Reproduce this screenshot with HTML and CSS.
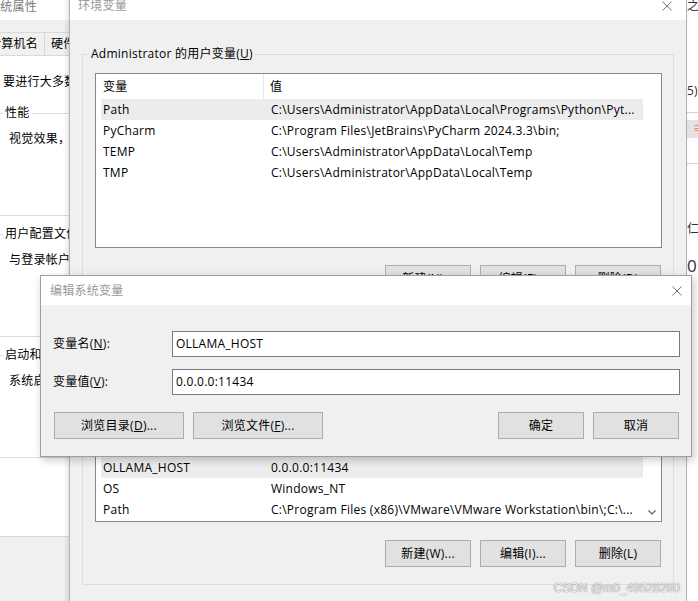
FILE: index.html
```html
<!DOCTYPE html>
<html lang="zh-CN">

<head>
    <meta charset="UTF-8">
    <meta name="viewport" content="width=device-width, initial-scale=1.0">
    <title>环境变量</title>

    <link rel="stylesheet" href="styles.css">
</head>

<body>
    <div class="desktop">

        <!-- 系统属性 (behind) -->
        <div class="window sysprops">
            <div class="titlebar"><span class="title">系统属性</span></div>
            <div class="body">
                <div class="tabs">
                    <span class="tab">计算机名</span>
                    <span class="tab">硬件</span>
                    <span class="tab">高级</span>
                </div>
                <div class="tabpanel">
                    <p class="note">要进行大多数更改，你必须作为管理员登录。</p>
                    <fieldset class="group">
                        <legend>性能</legend>
                        <p>视觉效果，处理器计划，内存使用，以及虚拟内存</p>
                    </fieldset>
                    <fieldset class="group">
                        <legend>用户配置文件</legend>
                        <p>与登录帐户相关的桌面设置</p>
                    </fieldset>
                    <fieldset class="group">
                        <legend>启动和故障恢复</legend>
                        <p>系统启动、系统故障和调试信息</p>
                    </fieldset>
                </div>
            </div>
        </div>

        <!-- page peeking out on the right -->
        <div class="window sidepage">
            <p class="frag frag-top">之</p>
            <p class="frag frag-path">5)\VM</p>
            <div class="frag-bar"><span>≡</span></div>
            <p class="frag frag-mid">仁</p>
            <p class="frag frag-big">0.</p>
        </div>

        <!-- 环境变量 -->
        <div class="window envvars">
            <div class="titlebar">
                <span class="title">环境变量</span>
                <svg class="close" viewBox="0 0 10 10"><path d="M0.5 0.5L9.5 9.5M9.5 0.5L0.5 9.5" /></svg>
            </div>
            <div class="body">
                <fieldset class="group">
                    <legend>Administrator 的用户变量(<u>U</u>)</legend>
                    <div class="listview user-list">
                        <div class="lv-main">
                            <div class="lv-head"><span class="col-name">变量</span><span class="col-value">值</span></div>
                            <div class="lv-rows">
                                <div class="lv-row selected"><span class="col-name">Path</span><span class="col-value">C:\Users\Administrator\AppData\Local\Programs\Python\Pyt...</span></div>
                                <div class="lv-row"><span class="col-name">PyCharm</span><span class="col-value">C:\Program Files\JetBrains\PyCharm 2024.3.3\bin;</span></div>
                                <div class="lv-row"><span class="col-name">TEMP</span><span class="col-value">C:\Users\Administrator\AppData\Local\Temp</span></div>
                                <div class="lv-row"><span class="col-name">TMP</span><span class="col-value">C:\Users\Administrator\AppData\Local\Temp</span></div>
                            </div>
                        </div>
                        <div class="lv-gutter"></div>
                    </div>
                    <div class="btn-row">
                        <button>新建(N)...</button>
                        <button>编辑(E)...</button>
                        <button>删除(D)</button>
                    </div>
                </fieldset>

                <fieldset class="group">
                    <legend>系统变量(<u>S</u>)</legend>
                    <div class="listview system-list">
                        <div class="lv-main">
                            <div class="lv-head"><span class="col-name">变量</span><span class="col-value">值</span></div>
                            <div class="lv-rows">
                                <div class="lv-row"><span class="col-name">ComSpec</span><span class="col-value">C:\Windows\system32\cmd.exe</span></div>
                                <div class="lv-row"><span class="col-name">DriverData</span><span class="col-value">C:\Windows\System32\Drivers\DriverData</span></div>
                                <div class="lv-row"><span class="col-name">NUMBER_OF_PROCESSORS</span><span class="col-value">8</span></div>
                                <div class="lv-row selected"><span class="col-name">OLLAMA_HOST</span><span class="col-value">0.0.0.0:11434</span></div>
                                <div class="lv-row"><span class="col-name">OS</span><span class="col-value">Windows_NT</span></div>
                                <div class="lv-row"><span class="col-name">Path</span><span class="col-value">C:\Program Files (x86)\VMware\VMware Workstation\bin\;C:\...</span></div>
                            </div>
                        </div>
                        <div class="lv-gutter">
                            <div class="scroll-arrow">
                                <svg viewBox="0 0 8 5"><path d="M0.5 0.5L4 4L7.5 0.5" /></svg>
                            </div>
                        </div>
                    </div>
                    <div class="btn-row">
                        <button>新建(W)...</button>
                        <button>编辑(I)...</button>
                        <button>删除(L)</button>
                    </div>
                </fieldset>

                <div class="btn-row footer">
                    <button>确定</button>
                    <button>取消</button>
                </div>
            </div>
        </div>

        <!-- 编辑系统变量 -->
        <div class="window edit-dialog">
            <div class="titlebar">
                <span class="title">编辑系统变量</span>
                <svg class="close" viewBox="0 0 10 10"><path d="M0.5 0.5L9.5 9.5M9.5 0.5L0.5 9.5" /></svg>
            </div>
            <div class="body">
                <div class="field">
                    <label>变量名(<u>N</u>):</label>
                    <div class="textbox">OLLAMA_HOST</div>
                </div>
                <div class="field">
                    <label>变量值(<u>V</u>):</label>
                    <div class="textbox">0.0.0.0:11434</div>
                </div>
                <div class="actions">
                    <button class="wide">浏览目录(<u>D</u>)...</button>
                    <button class="wide">浏览文件(<u>F</u>)...</button>
                    <span class="spacer"></span>
                    <button>确定</button>
                    <button>取消</button>
                </div>
            </div>
        </div>

        <span class="watermark">CSDN @m0_49528260</span>
    </div>
</body>

</html>
```

FILE: styles.css
```css
* {
    box-sizing: border-box;
    margin: 0;
    padding: 0;
}

body {
    font-family: "Open Sans", "Noto Sans CJK SC", sans-serif;
    font-size: 12px;
    line-height: 18px;
    letter-spacing: 0.25px;
    color: #000;
    background: #f0f0f0;
}

.desktop {
    position: relative;
    width: 698px;
    height: 601px;
    overflow: hidden;
}

/* windows sit on the desktop at their own spots */
.window {
    position: absolute;
    display: flex;
    flex-direction: column;
    background: #f0f0f0;
}

.titlebar {
    display: flex;
    align-items: center;
    justify-content: space-between;
    flex-shrink: 0;
    background: #fff;
}

.title {
    color: #999;
    white-space: nowrap;
}

.close {
    width: 10px;
    height: 10px;
    fill: none;
    stroke: #777;
    stroke-width: 1;
}

fieldset.group {
    border: 1px solid #dcdcdc;
}

fieldset.group legend {
    padding: 0 2px;
    margin-left: -6px;
    white-space: nowrap;
}

button {
    font: inherit;
    letter-spacing: inherit;
    width: 86px;
    height: 27px;
    color: #000;
    background: #e1e1e1;
    border: 1px solid #adadad;
    white-space: nowrap;
}

/* 系统属性 */
.sysprops {
    left: -32px;
    top: -10px;
    width: 102px;
    height: 620px;
    z-index: 1;
}

.sysprops .titlebar {
    height: 30px;
    padding: 4px 0 0 20px;
}

.sysprops .title {
    color: #7a7a7a;
}

.sysprops .body {
    padding: 12px 0 0 8px;
}

.tabs {
    display: flex;
    height: 23px;
    margin-left: 6px;
}

.tab {
    padding: 0 6px;
    line-height: 22px;
    border: 1px solid #d9d9d9;
    border-bottom: none;
    white-space: nowrap;
}

.tab + .tab {
    border-left: none;
}

.tabpanel {
    height: 482px;
    width: 200px;
    background: #fff;
    border: 1px solid #d9d9d9;
    padding: 17px 0 0 20px;
    white-space: nowrap;
}

.tabpanel .note {
    margin-left: 6px;
}

.sysprops fieldset.group {
    height: 112px;
    margin-top: 9px;
    padding: 8px 11px;
}

.sysprops .note + fieldset.group {
    margin-top: 13px;
}

/* right-hand page */
.sidepage {
    left: 686px;
    top: 0;
    width: 30px;
    height: 601px;
    background: #fff;
    z-index: 1;
    padding-left: 1px;
}

.frag {
    white-space: nowrap;
    color: #333;
}

.frag-top {
    margin-top: -3px;
}

.frag-path {
    margin-top: 67px;
}

.frag-bar {
    margin-top: 12px;
    height: 52px;
    border-top: 1px solid #d0d0d0;
    border-bottom: 1px solid #d0d0d0;
    padding-top: 7px;
}

.frag-bar span {
    display: block;
    height: 18px;
    background: #e4e4e4;
    color: #e07a1f;
    padding-left: 6px;
}

.frag-mid {
    margin-top: 56px;
}

.frag-big {
    margin-top: 19px;
    font-size: 17px;
}

/* 环境变量 */
.envvars {
    left: 69px;
    top: -10px;
    width: 618px;
    height: 660px;
    z-index: 2;
    border: 1px solid #b4b4b4;
    box-shadow: -2px 0 5px rgba(0, 0, 0, 0.12);
}

.envvars .titlebar {
    height: 29px;
    padding: 0 14px 0 8px;
}

.envvars .body {
    padding: 25px 12px 0;
}

.envvars fieldset.group {
    padding: 10px 11px 10px 12px;
}

.envvars fieldset.group + fieldset.group {
    margin-top: 8px;
    padding-bottom: 17px;
}

.btn-row {
    display: flex;
    justify-content: flex-end;
    gap: 9px;
    margin-top: 17px;
    padding-right: 1px;
}

.system-list + .btn-row {
    margin-top: 18px;
}

.btn-row.footer {
    margin-top: 20px;
}

/* list views */
.listview {
    display: flex;
    background: #fff;
    border: 1px solid #828790;
}

.user-list {
    height: 175px;
}

.system-list {
    height: 183px;
}

.lv-main {
    flex: 1;
    display: flex;
    flex-direction: column;
    overflow: hidden;
}

.lv-gutter {
    width: 18px;
    display: flex;
    flex-direction: column;
    justify-content: flex-end;
}

.lv-head {
    display: flex;
    height: 25px;
    flex-shrink: 0;
    line-height: 25px;
}

.lv-head .col-name {
    width: 168px;
    padding-left: 7px;
    border-right: 1px solid #e5e5e5;
}

.lv-head .col-value {
    padding-left: 6px;
}

.lv-rows {
    flex: 1;
    display: flex;
    flex-direction: column;
    overflow: hidden;
}

.system-list .lv-rows {
    justify-content: flex-end;
    padding-bottom: 1px;
}

.lv-row {
    display: flex;
    flex-shrink: 0;
    height: 21px;
    line-height: 21px;
    margin-left: 5px;
    white-space: nowrap;
}

.lv-row.selected {
    background: #ececec;
}

.lv-row .col-name {
    width: 168px;
    flex-shrink: 0;
    padding-left: 2px;
}

.lv-row .col-value {
    flex: 1;
    overflow: hidden;
    padding-left: 2px;
}

.scroll-arrow {
    height: 17px;
    display: flex;
    align-items: center;
    justify-content: center;
}

.scroll-arrow svg {
    width: 8px;
    height: 5px;
    fill: none;
    stroke: #606060;
    stroke-width: 1.2;
}

/* 编辑系统变量 */
.edit-dialog {
    left: 40px;
    top: 275px;
    width: 652px;
    height: 182px;
    z-index: 3;
    border: 1px solid #9e9e9e;
    box-shadow: 2px 3px 8px rgba(0, 0, 0, 0.22);
}

.edit-dialog .titlebar {
    height: 29px;
    padding: 0 9px;
}

.edit-dialog .body {
    display: flex;
    flex-direction: column;
    padding: 26px 11px 0 12px;
}

.field {
    display: flex;
    align-items: center;
    height: 26px;
}

.field + .field {
    margin-top: 12px;
}

.field label {
    width: 119px;
    flex-shrink: 0;
}

.textbox {
    flex: 1;
    height: 26px;
    line-height: 24px;
    padding: 0 3px;
    background: #fff;
    border: 1px solid #7a7a7a;
}

.actions {
    display: flex;
    gap: 9px;
    margin-top: 17px;
    padding: 0 1px;
}

.actions .wide {
    width: 130px;
}

.spacer {
    flex: 1;
}

.watermark {
    position: absolute;
    right: 18px;
    bottom: 4px;
    z-index: 4;
    font-family: "Liberation Sans", sans-serif;
    font-size: 12px;
    letter-spacing: 0;
    color: rgba(255, 255, 255, 0.85);
    text-shadow: 0 0 1px #888, 0 0 1px #888;
}
```
